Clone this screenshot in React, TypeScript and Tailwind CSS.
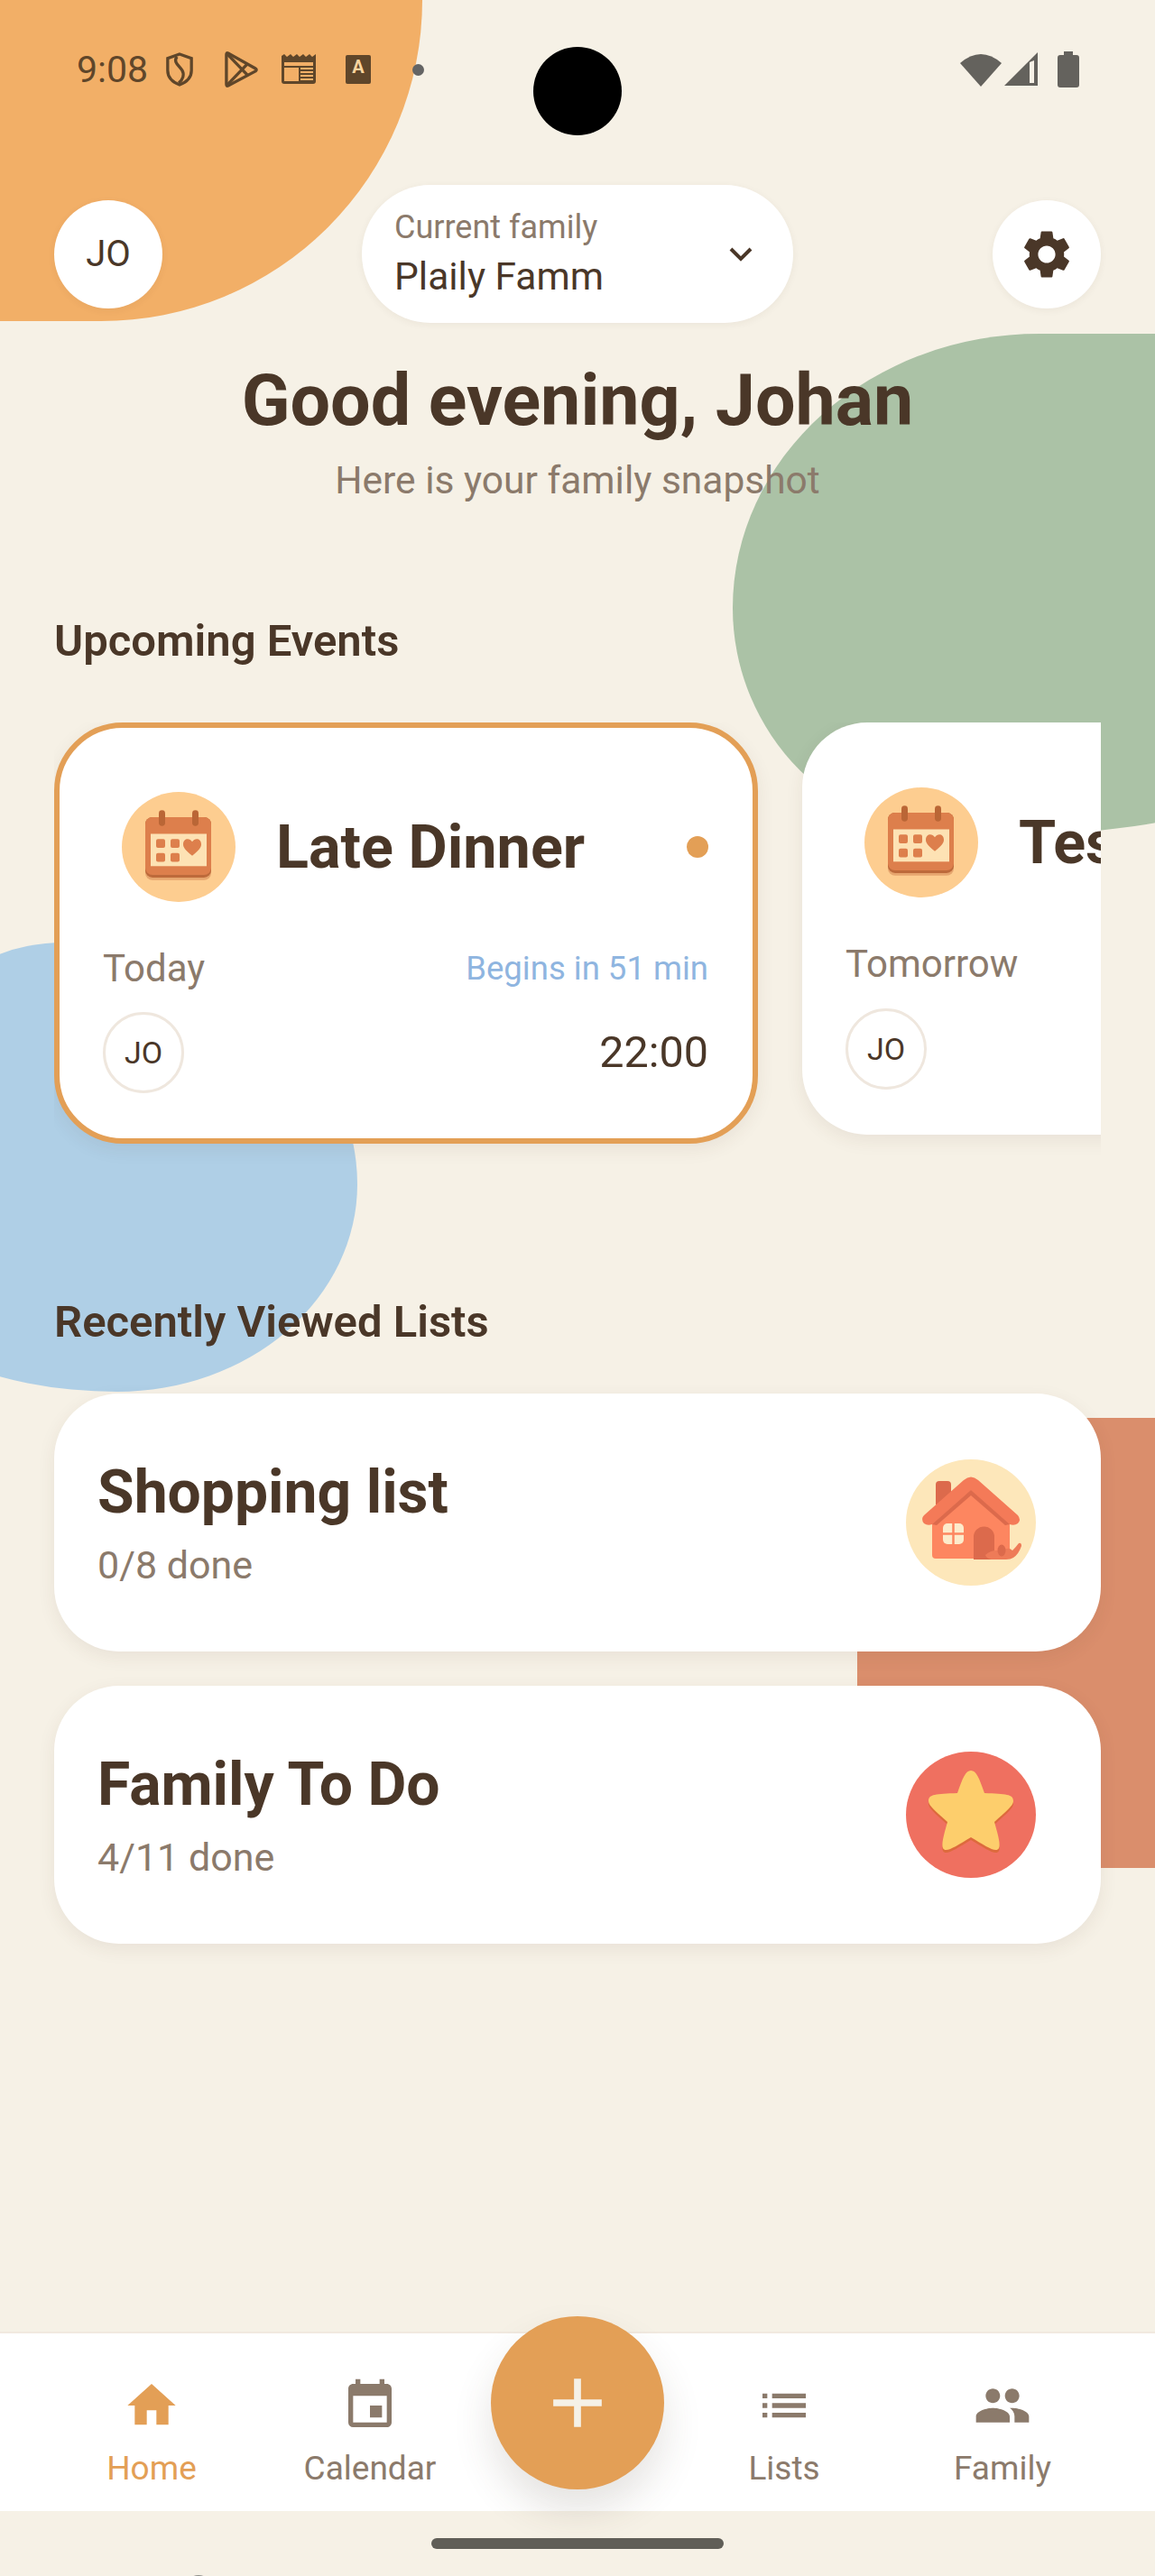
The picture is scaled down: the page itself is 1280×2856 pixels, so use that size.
import React from "react";
import { MdHome, MdEvent, MdList, MdPeople, MdSettings, MdAdd } from "react-icons/md";

function CalendarArt() {
  return (
    <svg viewBox="0 0 126 126" preserveAspectRatio="none" className="w-[126px] h-[122px] shrink-0">
      <ellipse cx="63" cy="63" rx="63" ry="63" fill="#FDCD90" />
      <rect x="26" y="29" width="73" height="72" rx="8" fill="#E6A56E" />
      <rect x="26" y="29" width="73" height="69" rx="8" fill="#BD6A3B" />
      <rect x="26" y="29" width="73" height="66" rx="8" fill="#DD7F4C" />
      <rect x="41" y="21" width="7" height="18" rx="3.500" fill="#BA6636" />
      <rect x="78" y="21" width="7" height="18" rx="3.500" fill="#BA6636" />
      <rect x="32" y="48" width="62" height="37" fill="#FDE2B4" />
      <rect x="38" y="54" width="10" height="10" rx="2" fill="#DD7F4C" />
      <rect x="54" y="54" width="10" height="10" rx="2" fill="#DD7F4C" />
      <rect x="38" y="70" width="10" height="10" rx="2" fill="#DD7F4C" />
      <rect x="54" y="70" width="10" height="10" rx="2" fill="#DD7F4C" />
      <path d="M78 73 C70 67 68 63 68 60 C68 53 75 52 78 57 C81 52 88 53 88 60 C88 63 86 67 78 73Z" fill="#DD7F4C" />
    </svg>
  );
}

function HouseArt() {
  return (
    <svg viewBox="0 0 144 140" className="w-[144px] h-[140px] shrink-0">
      <ellipse cx="72" cy="70" rx="72" ry="70" fill="#FDE7BA" />
      <path d="M33 28a4 4 0 0 1 4-4h9a4 4 0 0 1 4 4v22H33Z" fill="#DC6A4C" />
      <path d="M29 70 72 32l43 38v36a4 4 0 0 1-4 4H33a4 4 0 0 1-4-4Z" fill="#FD8660" />
      <path d="M20 62 64 23q8-7 16 0l44 39q4 5 0 9-4 3-9 1L72 34 29 72q-5 2-9-1-4-5 0-9Z" fill="#F47A58" />
      <path d="M29 72 72 34l43 38-5 1-38-33-38 33Z" fill="#DC6A4C" />
      <rect x="41" y="71" width="23" height="23" rx="5" fill="#FDEBCB" />
      <path d="M52.500 71v23M41 82.500h23" stroke="#FD8660" strokeWidth="2.500" />
      <path d="M75 111V86a11 11 0 0 1 23 0v25Z" fill="#DC6A4C" />
      <path d="M88 106q8-7 18-4 7-6 12-1 4-4 7-8 3-1 3 3-3 9-9 13-3 2-8 2H95q-6-1-7-5Z" fill="#EE7B58" />
      <ellipse cx="106" cy="101" rx="4.500" ry="6.500" fill="#DC6A4C" />
    </svg>
  );
}

function StarArt() {
  const d = "M72 21c6 0 9 8 15 25 24 1 32 1 32 9 0 5-9 12-21 23 4 14 7 25 5 29-3 6-14-2-31-12-17 10-28 18-31 12-2-4 1-15 5-29-12-11-21-18-21-23 0-8 8-8 32-9 6-17 9-25 15-25Z";
  return (
    <svg viewBox="0 0 144 140" className="w-[144px] h-[140px] shrink-0">
      <ellipse cx="72" cy="70" rx="72" ry="70" fill="#EF7060" />
      <path d={d} fill="#DD6A3C" transform="translate(0 3)" />
      <path d={d} fill="#FDCE6C" />
    </svg>
  );
}

function StatusLeft() {
  const c = "#5F462A";
  return (
    <div className="flex items-center h-[44px]">
      <span className="text-[41px] leading-none text-[#5F462A] w-[98px] shrink-0">9:08</span>
      <svg viewBox="0 0 34 40" className="w-[32px] h-[40px] shrink-0" fill="none" stroke={c} strokeWidth="3.500">
        <path d="M17 2 31 7v14c0 8-6 14-14 17C9 35 3 29 3 21V7Z" />
        <path d="M14 5c-5 6 2 10 6 16 3 5 1 11-4 15" />
      </svg>
      <svg viewBox="0 0 40 44" className="w-[38px] h-[42px] ml-[34px] shrink-0" fill="none" stroke={c} strokeWidth="3.500" strokeLinejoin="round">
        <path d="M4 3 36 21Q38 22 36 24L4 41Q2 42 2 39V5Q2 2 4 3Z" />
        <path d="M3 4 27 29M3 40 27 15" />
      </svg>
      <svg viewBox="0 0 38 34" className="w-[38px] h-[34px] ml-[25px] shrink-0">
        <path d="M0 2 3 0 6 3 10 0 13 3 17 0 20 3 24 0 27 3 31 0 34 3 38 0V30a3 3 0 0 1-3 3H3a3 3 0 0 1-3-3Z" fill={c} />
        <path d="M3 9H35V13H3ZM3 15H19V30H3ZM21 15H35V17H21ZM21 19H35V21H21ZM21 23H35V25H21ZM21 27H35V29H21Z" fill="#F2AF67" />
      </svg>
      <div className="w-[28px] h-[32px] ml-[33px] shrink-0 bg-[#5F462A] rounded-[2px] flex items-center justify-center text-[#F8D49E] text-[20px] font-bold leading-none pb-[6px]">A</div>
      <div className="w-[13px] h-[13px] ml-[46px] shrink-0 rounded-full bg-[#646464]" />
    </div>
  );
}

function StatusRight() {
  return (
    <div className="flex items-center h-[44px]">
      <svg viewBox="0 0 46 38" className="w-[46px] h-[38px]" fill="#64625D"><path d="M0 12Q23-8 46 12L23 38Z" /></svg>
      <svg viewBox="0 0 38 38" className="w-[38px] h-[38px] ml-[3px]" fill="#64625D"><path fillRule="evenodd" d="M0 37 37 0V37ZM28 11V34H33V9Z" /></svg>
      <svg viewBox="0 0 24 40" className="w-[24px] h-[40px] ml-[21px]" fill="#64625D"><path d="M7 0H17V4H21a3 3 0 0 1 3 3V37a3 3 0 0 1-3 3H3a3 3 0 0 1-3-3V7a3 3 0 0 1 3-3H7Z" /></svg>
    </div>
  );
}

function Avatar() {
  return (
    <div className="w-[90px] h-[90px] rounded-full border-[3px] border-[#EFE7DE] bg-white flex items-center justify-center text-[34px] text-[#4A3728]">JO</div>
  );
}

function ListCard({ title, sub, art, className }: { title: string; sub: string; art: React.ReactNode; className: string }) {
  return (
    <div className={"h-[286px] rounded-[72px] bg-white shadow-[0_6px_20px_rgba(74,55,40,0.08)] pl-[48px] pr-[72px] flex items-center justify-between " + className}>
      <div>
        <div className="text-[66px] leading-[76px] font-bold text-[#4A3728]">{title}</div>
        <div className="text-[43px] leading-[50px] mt-[17px] text-[#8B7A6B]">{sub}</div>
      </div>
      {art}
    </div>
  );
}

function NavItem({ icon, label, active }: { icon: React.ReactNode; label: string; active?: boolean }) {
  return (
    <div className={"w-[242px] flex flex-col items-center " + (active ? "text-[#E39F56]" : "text-[#8B7A6B]")}>
      {icon}
      <span className="text-[37px] leading-[40px] mt-[18px]">{label}</span>
    </div>
  );
}

export default function App() {
  return (
    <div className="relative w-[1280px] h-[2856px] overflow-hidden bg-[#F6F1E6] font-['Roboto',sans-serif]">
      <div className="absolute left-0 top-0 w-[468px] h-[356px] bg-[#F2AF67] rounded-br-[360px]" />
      <div className="absolute left-[812px] top-[370px] w-[705px] h-[559px] bg-[#ABC2A6] rounded-[340px_200px_450px_255px/304px_200px_140px_255px]" />
      <div className="absolute left-[-130px] top-[1045px] w-[526px] h-[498px] bg-[#AFCFE6] rounded-[200px_326px_266px_260px/200px_268px_230px_125px]" />
      <div className="absolute left-[950px] top-[1572px] w-[330px] h-[499px] bg-[#DA8E6C]" />
      <div className="absolute left-[205px] top-[2855px] w-[30px] h-[30px] rounded-full bg-[#8A8A86]" />

      <div className="relative">
        <div className="h-[205px] pl-[85px] pr-[84px] pt-[55px] flex items-start justify-between">
          <StatusLeft />
          <StatusRight />
        </div>
        <div className="absolute left-[591px] top-[52px] w-[98px] h-[98px] rounded-full bg-black" />

        <div className="h-[153px] px-[60px] flex items-center justify-between">
          <div className="w-[120px] h-[120px] rounded-full bg-white flex items-center justify-center text-[40px] text-[#4A3728] shadow-[0_2px_8px_rgba(74,55,40,0.06)]">JO</div>
          <div className="w-[478px] h-[153px] rounded-[76px] bg-white pl-[36px] pr-[45px] flex items-center justify-between shadow-[0_2px_8px_rgba(74,55,40,0.06)]">
            <div>
              <div className="text-[36px] leading-[44px] text-[#8B7A6B]">Current family</div>
              <div className="text-[42.500px] leading-[54px] mt-[6px] text-[#4A3728]">Plaily Famm</div>
            </div>
            <svg viewBox="0 0 26 16" className="w-[26px] h-[16px]" fill="none" stroke="#4A3728" strokeWidth="4">
              <path d="M2 2 13 13 24 2" />
            </svg>
          </div>
          <div className="w-[120px] h-[120px] rounded-full bg-white flex items-center justify-center shadow-[0_2px_8px_rgba(74,55,40,0.06)]">
            <MdSettings size={64} color="#4A3728" />
          </div>
        </div>

        <div className="mt-[41px] text-center text-[79px] leading-[90px] font-bold text-[#4A3728]">Good evening, Johan</div>
        <div className="mt-[20px] text-center text-[42.500px] leading-[48px] text-[#8B7A6B]">Here is your family snapshot</div>

        <div className="mt-[126px] px-[60px] text-[49px] leading-[56px] font-semibold text-[#4A3728]">Upcoming Events</div>

        <div className="ml-[60px] mt-[62px] w-[1160px] h-[520px] overflow-hidden flex items-start gap-[49px]">
          <div className="shrink-0 w-[780px] h-[467px] rounded-[76px] border-[6px] border-[#E39F56] bg-white shadow-[0_6px_20px_rgba(74,55,40,0.08)] pl-[48px] pr-[49px] pt-[71px]">
            <div className="flex items-center pl-[21px] h-[122px]">
              <CalendarArt />
              <span className="ml-[45px] text-[66.500px] leading-[76px] font-bold text-[#4A3728]">Late Dinner</span>
              <div className="ml-auto w-[24px] h-[24px] rounded-full bg-[#E39F56]" />
            </div>
            <div className="mt-[49px] flex items-center justify-between">
              <span className="text-[42px] leading-[50px] text-[#8B7A6B]">Today</span>
              <span className="text-[36.500px] leading-[50px] text-[#8FB5E0]">Begins in 51 min</span>
            </div>
            <div className="mt-[23px] flex items-center justify-between">
              <Avatar />
              <span className="text-[48.500px] leading-[56px] text-[#4A3728]">22:00</span>
            </div>
          </div>
          <div className="shrink-0 w-[780px] h-[457px] rounded-[72px] bg-white shadow-[0_6px_20px_rgba(74,55,40,0.08)] pl-[48px] pt-[72px]">
            <div className="flex items-center pl-[21px] h-[122px]">
              <CalendarArt />
              <span className="ml-[45px] text-[66.500px] leading-[76px] font-bold text-[#4A3728] whitespace-nowrap">Test</span>
            </div>
            <div className="mt-[49px] text-[42px] leading-[50px] text-[#8B7A6B]">Tomorrow</div>
            <div className="mt-[24px]"><Avatar /></div>
          </div>
        </div>

        <div className="mt-[117px] px-[60px] text-[49px] leading-[56px] font-semibold text-[#4A3728]">Recently Viewed Lists</div>

        <div className="mt-[51px] mx-[60px]">
          <ListCard title="Shopping list" sub="0/8 done" art={<HouseArt />} className="" />
          <ListCard title="Family To Do" sub="4/11 done" art={<StarArt />} className="mt-[38px]" />
        </div>
      </div>

      <div className="absolute left-0 right-0 top-[2585px] h-[199px] bg-white border-t-[2px] border-[#F1E9DF] pl-[47px] pr-[48px] pt-[48px] flex items-start justify-between">
        <div className="flex"><NavItem icon={<MdHome size={64} />} label="Home" active /><NavItem icon={<MdEvent size={64} />} label="Calendar" /></div>
        <div className="flex"><NavItem icon={<MdList size={64} />} label="Lists" /><NavItem icon={<MdPeople size={64} />} label="Family" /></div>
      </div>
      <div className="absolute left-[544px] top-[2568px] w-[192px] h-[192px] rounded-full bg-[#E39F56] text-[#F5F1E7] flex items-center justify-center shadow-[0_24px_44px_rgba(74,55,40,0.14)]">
        <MdAdd size={92} />
      </div>
      <div className="absolute left-[478px] top-[2814px] w-[324px] h-[12px] rounded-full bg-[#605E57]" />
    </div>
  );
}
